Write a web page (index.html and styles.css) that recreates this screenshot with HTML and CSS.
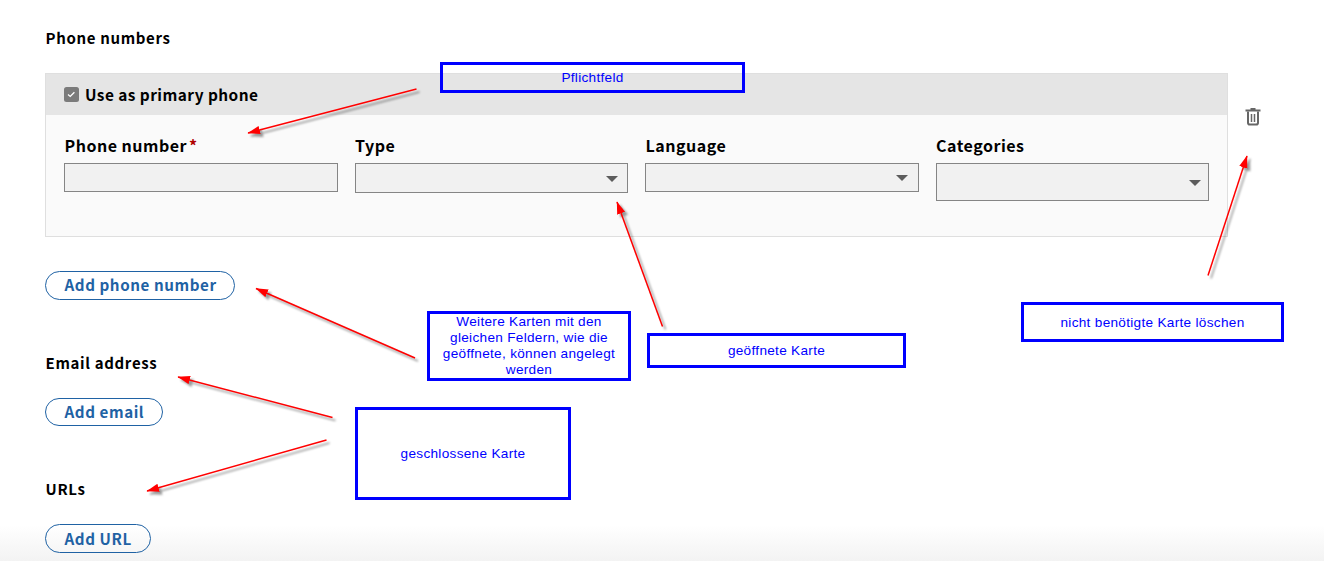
FILE: index.html
```html
<!DOCTYPE html>
<html lang="en">
<head>
<meta charset="utf-8">
<title>Contact details</title>
<link rel="stylesheet" href="styles.css">
</head>
<body>
<main class="page">
  <section class="group group-phone">
    <h2 class="heading">Phone numbers</h2>
    <div class="card-row">
      <div class="card">
        <div class="card-head">
          <svg class="check" viewBox="0 0 15 15"><rect width="15" height="15" rx="2.5" fill="#7b7b7b"/><path d="M4 7.6 6.2 9.4 10.4 5.2" fill="none" stroke="#fff" stroke-width="1.3"/></svg>
          <span class="label label-primary">Use as primary phone</span>
        </div>
        <div class="fields">
          <div class="field"><span class="label">Phone number<span class="required">*</span></span><div class="control"></div></div>
          <div class="field"><span class="label">Type</span><div class="control control-type"><i class="caret"></i></div></div>
          <div class="field"><span class="label">Language</span><div class="control"><i class="caret"></i></div></div>
          <div class="field"><span class="label">Categories</span><div class="control control-tall"><i class="caret"></i></div></div>
        </div>
      </div>
      <svg class="trash" viewBox="0 0 16 18"><path d="M5.500 0h5v1.500H15.500v2H.5v-2h5z" fill="#666"/><path d="M3 3.500V14.700Q3 16.500 4.800 16.500H11.200Q13 16.500 13 14.700V3.500" fill="none" stroke="#666" stroke-width="2"/><path d="M6.500 6v8M9.500 6v8" stroke="#666" stroke-width="1.500"/></svg>
    </div>
    <button class="add">Add phone number</button>
  </section>
  <section class="group group-email">
    <h2 class="heading">Email address</h2>
    <button class="add add-email">Add email</button>
  </section>
  <section class="group">
    <h2 class="heading">URLs</h2>
    <button class="add add-url">Add URL</button>
  </section>
</main>
<div class="note note-required">Pflichtfeld</div>
<div class="note note-more">Weitere Karten mit den gleichen Feldern, wie die geöffnete, können angelegt werden</div>
<div class="note note-open">geöffnete Karte</div>
<div class="note note-delete">nicht benötigte Karte löschen</div>
<div class="note note-closed">geschlossene Karte</div>
<svg class="arrows" viewBox="0 0 1324 561">
  <defs>
    <marker id="head" markerUnits="userSpaceOnUse" markerWidth="13" markerHeight="10" refX="12" refY="4.500" orient="auto"><path d="M0 .3 12.500 4.500 0 8.700z" fill="#f00"/></marker>
  </defs>
  <g class="strokes">
    <path d="M416.500 89 248 133"/>
    <path d="M415 358 256 288.500"/>
    <path d="M662.500 326.500 617 202"/>
    <path d="M1208 275.500 1247 156"/>
    <path d="M332.500 417.500 178 377"/>
    <path d="M326.500 440 147 491"/>
  </g>
</svg>
</body>
</html>
```
FILE: styles.css
```css
* { box-sizing: border-box; }
body {
  margin: 0;
  height: 561px;
  overflow: hidden;
  position: relative;
  background: linear-gradient(#fff 525px, #f3f3f3 561px);
  color: #000;
  font-family: "Noto Sans CJK SC", "Open Sans", sans-serif;
  font-weight: 700;
}
.page { padding: 28px 0 0 45px; }
.group { display: flex; flex-direction: column; align-items: flex-start; }
.group-phone { margin-bottom: 53px; }
.group-email { margin-bottom: 53px; }
.heading { margin: 0; padding-left: .5px; font-size: 15px; line-height: 20px; letter-spacing: .66px; }
.group-phone .heading { margin-bottom: 25px; }
.card-row { display: flex; gap: 17px; margin-bottom: 34px; }
.card { width: 1183px; height: 164px; border: 1px solid #dfdfdf; background: #fafafa; }
.card-head { display: flex; align-items: center; gap: 6px; height: 41px; padding: 0 18px; background: #e5e5e5; }
.check { width: 15px; height: 15px; }
.label { padding-left: .5px; font-size: 16px; line-height: 18px; margin-bottom: 2px; letter-spacing: .5px; white-space: nowrap; }
.label-primary { padding-left: 0; font-size: 15.4px; letter-spacing: .45px; margin: -2px 0 0; }
.required { color: #b00000; margin-left: 2px; }
.fields { display: grid; grid-template-columns: repeat(4, 1fr); gap: 17px; padding: 21px 18px 0; }
.field { display: flex; flex-direction: column; gap: 7px; min-width: 0; }
.control { display: flex; align-items: center; justify-content: flex-end; height: 29px; padding-right: 9.5px; border: 1px solid #858585; background: #f1f1f1; }
.control-type { height: 30px; }
.control-tall { height: 38px; padding-right: 7.5px; }
.caret { border: 6px solid transparent; border-top-color: #5c5c5c; border-bottom: 0; margin-top: 1px; }
.trash { width: 16px; height: 18px; margin-top: 35px; }
.add {
  height: 29px;
  padding: 0 17.5px 2px 18.5px;
  border: 1px solid #1f62a4;
  border-radius: 15px;
  background: transparent;
  color: #1f62a4;
  font: inherit;
  font-size: 15.2px;
  line-height: 25px;
  letter-spacing: .57px;
}
.group:not(.group-phone) .heading { margin-bottom: 25px; }
.add-email { height: 28px; }
.add-url { padding-right: 18.5px; padding-bottom: 0; }
.note {
  position: absolute;
  display: flex;
  align-items: center;
  justify-content: center;
  border: 3px solid #00f;
  color: #00f;
  font: 13.6px/16px "Liberation Sans", Arial, sans-serif;
  letter-spacing: .3px;
  text-align: center;
}
.note-required { left: 440px; top: 62px; width: 305px; height: 31px; }
.note-more { left: 427px; top: 311px; width: 204px; height: 70px; padding: 0 8px; }
.note-open { left: 647px; top: 333px; width: 259px; height: 35px; }
.note-delete { left: 1021px; top: 302px; width: 263px; height: 40px; padding-top: 1px; }
.note-closed { left: 355px; top: 407px; width: 216px; height: 93px; }
.arrows { position: absolute; left: 0; top: 0; width: 1324px; height: 561px; pointer-events: none; }
.strokes { fill: none; stroke: #f00; stroke-width: 1.5; filter: drop-shadow(3px 3px 1px rgba(0, 0, 0, .4)); }
.strokes path { marker-end: url(#head); }
marker path { stroke: none; }
```
